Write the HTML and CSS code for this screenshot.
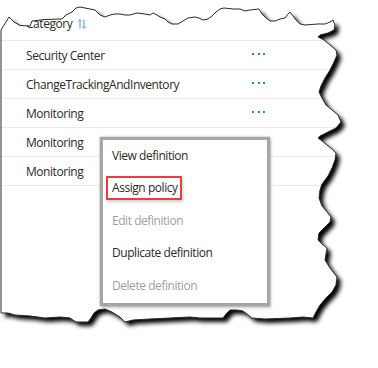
FILE: index.html
```html
<!DOCTYPE html>
<html lang="en">
<head>
    <meta charset="UTF-8" />
    <title>Policy definitions</title>
    <link rel="stylesheet" href="styles.css">
</head>
<body>

<div class="page">

    <!-- Таблица определений -->
    <div class="grid">
        <div class="head">
            <span>Category</span>
            <svg class="sort" width="8" height="10" viewBox="0 0 8 10">
                <path d="M2 9.5V0.8M0.4 2.4L2 0.8L3.6 2.4M6 0.5V9.2M4.4 7.6L6 9.2L7.6 7.6" fill="none" stroke="#4a97e6" stroke-width="1"/>
            </svg>
        </div>
        <div class="row"><span class="cell">Security Center</span><span class="more"><i></i><i></i><i></i></span></div>
        <div class="row"><span class="cell">ChangeTrackingAndInventory</span><span class="more"><i></i><i></i><i></i></span></div>
        <div class="row"><span class="cell">Monitoring</span><span class="more"><i></i><i></i><i></i></span></div>
        <div class="row"><span class="cell">Monitoring</span></div>
        <div class="row"><span class="cell">Monitoring</span></div>
    </div>

    <!-- Контекстное меню -->
    <ul class="menu">
        <li>View definition</li>
        <li><span class="marked">Assign policy</span></li>
        <li class="off">Edit definition</li>
        <li>Duplicate definition</li>
        <li class="off">Delete definition</li>
    </ul>

    <!-- Рваный край скриншота -->
    <svg class="torn" width="378" height="368" viewBox="0 0 378 368">
        <defs>
            <path id="paper" d="M1 30 L9 17 L14 22 L20 25.5 L30 26 L32 21 L45 19.5 L62 19 L66 15 L72 12 L76 8 L80 7 L85 8 L90 9 L95 10 L100 15 L105 17 L110 15 L115 14 L120 14 L125 15 L130 15 L137 13 L145 14 L150 15 L153 13 L157 15 L160 17 L165 19 L168 22 L172 24 L178 24 L183 21 L188 18 L195 17 L199 18 L203 20 L208 19 L212 16 L216 12 L220 9 L224 8 L233 9 L240 9 L245 11 L250 10 L259 9 L262 14 L266 18 L270 21 L275 21 L280 19 L285 18 L288 14 L290 12 L293 16 L296 20 L300 24 L305 25 L318 24 L325 24 L330 22 L333 20 L335 25 L334 30 L328 33 L320 35 L318 37 L324 40 L330 45 L336 50 L337 55 L334 62 L330 70 L325 78 L321 86 L319 92 L322 98 L326 105 L332 110 L338 115 L341 122 L336 128 L328 132 L320 136 L318 138 L322 141 L327 145 L333 150 L336 153 L335 160 L332 168 L328 176 L322 184 L320 190 L319 198 L322 206 L327 212 L331 217 L330 222 L325 227 L319 233 L318 240 L322 244 L327 248 L326 254 L325 260 L330 268 L337 277 L336 285 L332 292 L326 298 L320 305 L316 312 L313 318 L303 317 L290 318 L265 319 L252 318 L247 314 L243 311 L237 310 L230 310 L226 314 L223 318 L200 318 L190 317 L170 318 L150 319 L133 320 L125 322 L120 317 L112 312 L105 309 L98 310 L94 313 L91 318 L88 322 L76 322 L70 318 L60 317 L45 318 L30 316 L15 315 L8 313 L1 313 Z"/>
            <clipPath id="outside">
                <path clip-rule="evenodd" d="M0 0H378V368H0Z M1 30 L9 17 L14 22 L20 25.5 L30 26 L32 21 L45 19.5 L62 19 L66 15 L72 12 L76 8 L80 7 L85 8 L90 9 L95 10 L100 15 L105 17 L110 15 L115 14 L120 14 L125 15 L130 15 L137 13 L145 14 L150 15 L153 13 L157 15 L160 17 L165 19 L168 22 L172 24 L178 24 L183 21 L188 18 L195 17 L199 18 L203 20 L208 19 L212 16 L216 12 L220 9 L224 8 L233 9 L240 9 L245 11 L250 10 L259 9 L262 14 L266 18 L270 21 L275 21 L280 19 L285 18 L288 14 L290 12 L293 16 L296 20 L300 24 L305 25 L318 24 L325 24 L330 22 L333 20 L335 25 L334 30 L328 33 L320 35 L318 37 L324 40 L330 45 L336 50 L337 55 L334 62 L330 70 L325 78 L321 86 L319 92 L322 98 L326 105 L332 110 L338 115 L341 122 L336 128 L328 132 L320 136 L318 138 L322 141 L327 145 L333 150 L336 153 L335 160 L332 168 L328 176 L322 184 L320 190 L319 198 L322 206 L327 212 L331 217 L330 222 L325 227 L319 233 L318 240 L322 244 L327 248 L326 254 L325 260 L330 268 L337 277 L336 285 L332 292 L326 298 L320 305 L316 312 L313 318 L303 317 L290 318 L265 319 L252 318 L247 314 L243 311 L237 310 L230 310 L226 314 L223 318 L200 318 L190 317 L170 318 L150 319 L133 320 L125 322 L120 317 L112 312 L105 309 L98 310 L94 313 L91 318 L88 322 L76 322 L70 318 L60 317 L45 318 L30 316 L15 315 L8 313 L1 313 Z"/>
            </clipPath>
            <filter id="blur" x="-10%" y="-10%" width="130%" height="130%">
                <feGaussianBlur stdDeviation="2.2"/>
            </filter>
        </defs>
        <g clip-path="url(#outside)">
            <rect width="378" height="368" fill="#fff"/>
            <use href="#paper" fill="#000" transform="translate(4 4)" filter="url(#blur)"/>
        </g>
        <use href="#paper" fill="none" stroke="#2b2b2b" stroke-width="1"/>
    </svg>

</div>

</body>
</html>
```

FILE: styles.css
```css
/* общие стили */
body {
    margin: 0;
    padding: 0;
    font-family: "Open Sans", Arial, sans-serif;
    font-size: 12px;
    letter-spacing: -0.45px;
    color: #2b2a29;
    background: #fff;
}

.page {
    position: relative;
    width: 378px;
    height: 368px;
    overflow: hidden;
}

/* таблица */
.grid {
    padding-top: 6px;
    width: 340px;
}
.head {
    display: flex;
    align-items: center;
    gap: 6px;
    height: 34px;
    padding-left: 26px;
    border-bottom: 1px solid #edebe9;
}
.sort {
    margin-top: 1px;
}
.row {
    display: flex;
    align-items: center;
    height: 28px;
    padding-left: 26px;
    border-bottom: 1px solid #edebe9;
}
.cell {
    width: 226px;
}
.more {
    display: flex;
    gap: 3.5px;
    margin-top: -2px;
}
.more i {
    width: 2px;
    height: 2px;
    background: #2b7fd8;
}

/* контекстное меню */
.menu {
    position: absolute;
    left: 100px;
    top: 137px;
    width: 164px;
    margin: 0;
    padding: 0;
    list-style: none;
    background: #fff;
    border: 3px solid #a6a6a6;
    box-shadow: 0 0 2px rgba(0, 0, 0, 0.35), 1px 2px 3px rgba(0, 0, 0, 0.2);
}
.menu li {
    display: flex;
    align-items: center;
    height: 32.5px;
    padding-left: 9px;
    margin-top: -1px;
    margin-bottom: 1px;
}
.menu li.off {
    color: #a19f9d;
}
.marked {
    margin-left: -6px;
    padding: 1px 2px 2px 4px;
    border: 2px solid #ee3b3f;
    box-shadow: 1px 2px 3px rgba(0, 0, 0, 0.2);
}

/* рваный край поверх */
.torn {
    position: absolute;
    left: 0;
    top: 0;
    pointer-events: none;
}
```
